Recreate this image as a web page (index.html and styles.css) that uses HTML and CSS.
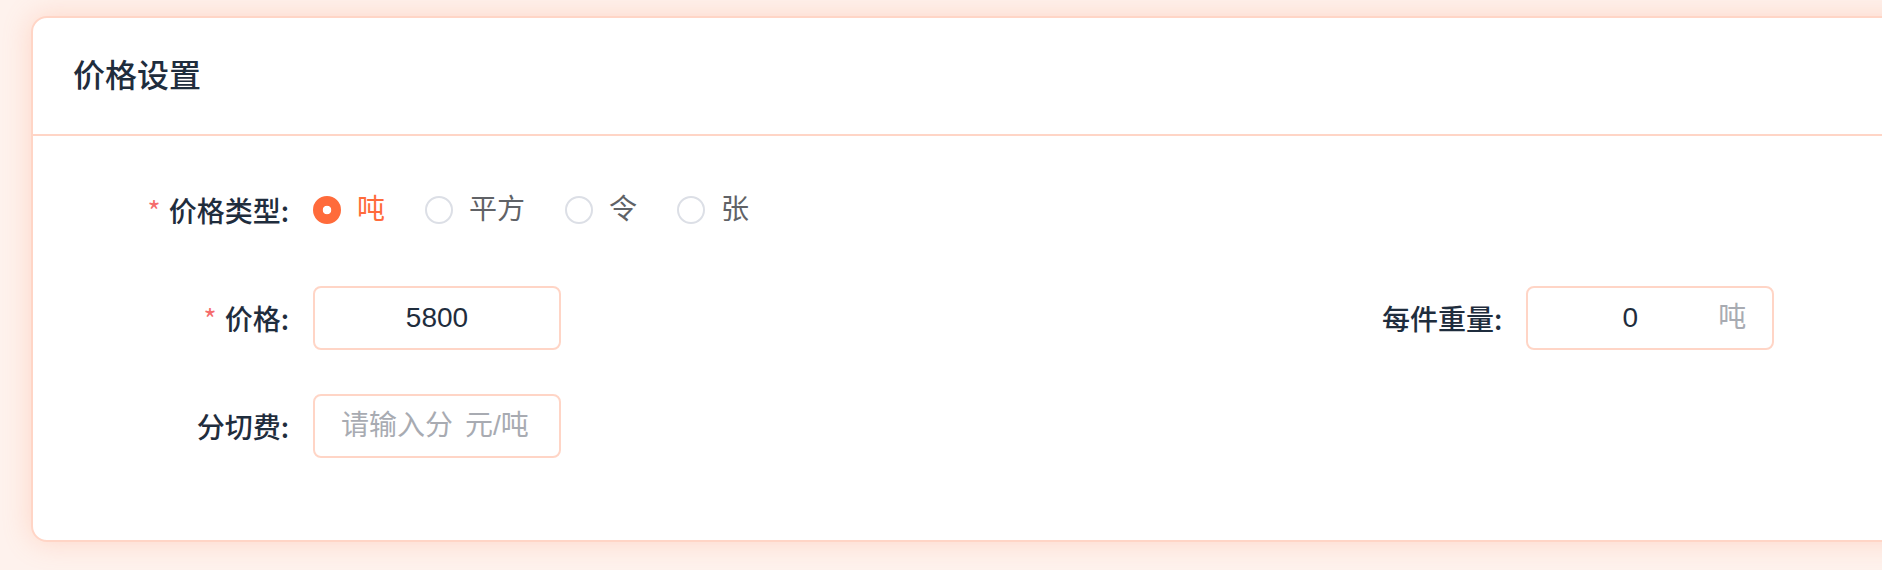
FILE: index.html
```html
<!DOCTYPE html>
<html lang="zh-CN">
<head>
    <meta charset="UTF-8">
    <meta name="viewport" content="width=device-width, initial-scale=1.0">
    <title>价格设置</title>
    <link rel="stylesheet" href="styles.css">
</head>
<body>
    <div class="page">
        <div class="card">
            <div class="card-header">价格设置</div>
            <div class="card-body">
                <div class="form-row">
                    <div class="form-item wide">
                        <label class="form-label required">价格类型:</label>
                        <div class="radio-group">
                            <label class="radio">
                                <input type="radio" name="priceType" value="ton" checked>
                                <span class="radio-label">吨</span>
                            </label>
                            <label class="radio">
                                <input type="radio" name="priceType" value="square">
                                <span class="radio-label">平方</span>
                            </label>
                            <label class="radio">
                                <input type="radio" name="priceType" value="ream">
                                <span class="radio-label">令</span>
                            </label>
                            <label class="radio">
                                <input type="radio" name="priceType" value="sheet">
                                <span class="radio-label">张</span>
                            </label>
                        </div>
                    </div>
                </div>

                <div class="form-row">
                    <div class="form-item">
                        <label class="form-label required">价格:</label>
                        <div class="input">
                            <input type="text" class="input-inner center" value="5800">
                        </div>
                    </div>
                    <div></div>
                    <div class="form-item">
                        <label class="form-label">每件重量:</label>
                        <div class="input">
                            <input type="text" class="input-inner center" value="0">
                            <span class="suffix">吨</span>
                        </div>
                    </div>
                </div>

                <div class="form-row">
                    <div class="form-item">
                        <label class="form-label">分切费:</label>
                        <div class="input">
                            <input type="text" class="input-inner short" placeholder="请输入分切费">
                            <span class="suffix">元/吨</span>
                        </div>
                    </div>
                </div>
            </div>
        </div>
    </div>
</body>
</html>
```

FILE: styles.css
```css
html, body {
    margin: 0;
    overflow: hidden;
}
body {
    font-family: "Liberation Sans", "Noto Sans CJK SC", sans-serif;
    font-size: 28px;
    color: #1f2d3d;
    background: #fef2ed;
}
.page {
    padding: 16px 0 0 31px;
    height: 570px;
    box-sizing: border-box;
}
.card {
    width: 1900px;
    background: #fff;
    border: 2px solid #ffd5c6;
    border-radius: 16px;
    box-shadow: 0 0 28px rgba(255, 150, 110, 0.3);
}
.card-header {
    padding: 36px 40px;
    line-height: 44px;
    font-size: 32px;
    font-weight: 500;
    border-bottom: 2px solid #ffd5c6;
}
.card-body {
    padding: 42px 40px 38px;
}
.form-row {
    display: grid;
    grid-template-columns: repeat(3, 1fr);
    margin-bottom: 44px;
}
.form-item {
    display: flex;
    align-items: center;
    height: 64px;
}
.form-item.wide {
    grid-column: 1 / -1;
}
.form-label {
    width: 240px;
    padding-right: 24px;
    box-sizing: border-box;
    text-align: right;
    font-family: "Noto Sans CJK SC", sans-serif;
    font-weight: 500;
    line-height: 64px;
    flex-shrink: 0;
}
.form-label.required::before {
    content: "*";
    color: #f56c6c;
    font-weight: 400;
    margin-right: 8px;
}
.radio-group {
    display: flex;
    align-items: center;
    white-space: nowrap;
}
.radio {
    display: flex;
    align-items: center;
    margin-right: 40px;
    cursor: pointer;
}
.radio input {
    appearance: none;
    -webkit-appearance: none;
    flex-shrink: 0;
    width: 28px;
    height: 28px;
    margin: 0;
    border: 2px solid #dcdfe6;
    border-radius: 50%;
    background: #fff;
    box-sizing: border-box;
}
.radio input:checked {
    border-color: #ff6b3b;
    background: radial-gradient(circle, #fff 0, #fff 4px, #ff6b3b 4.6px);
}
.radio-label {
    padding-left: 16px;
    color: #606266;
    line-height: 1;
}
.radio input:checked + .radio-label {
    color: #ff6b3b;
}
.input {
    display: flex;
    align-items: center;
    width: 248px;
    height: 64px;
    padding: 0 26px;
    box-sizing: border-box;
    border: 2px solid #ffd5c6;
    border-radius: 8px;
    background: #fff;
}
.input-inner {
    flex: 1;
    min-width: 0;
    height: 40px;
    line-height: 40px;
    border: none;
    outline: none;
    padding: 0;
    font: inherit;
    color: #1f2d3d;
    background: transparent;
}
.input-inner.center {
    text-align: center;
}
.input-inner.short {
    flex: 0 0 112px;
}
.input-inner::placeholder {
    color: #a8abb2;
}
.suffix {
    padding-left: 12px;
    height: 40px;
    line-height: 40px;
    color: #a8abb2;
    white-space: nowrap;
}
```
